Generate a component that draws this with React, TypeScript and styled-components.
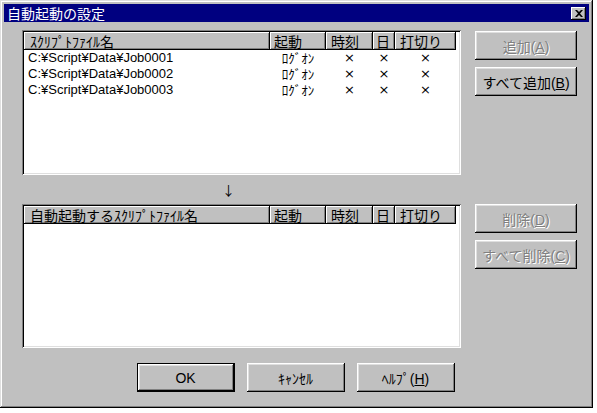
import React from 'react'
import styled, { createGlobalStyle } from 'styled-components'

const GlobalStyle = createGlobalStyle`
  html, body {
    margin: 0;
    padding: 0;
    background: #ffffff;
  }
  body {
    font-family: "Liberation Sans", "Noto Sans CJK JP", sans-serif;
    font-size: 14px;
    color: #000;
  }
`

const COLS = '246px 56px 47px 22px 61px'

const Window = styled.div`
  width: 593px;
  height: 408px;
  box-sizing: border-box;
  background: #c0c0c0;
  padding: 4px;
  display: flex;
  flex-direction: column;
  box-shadow: inset -1px -1px #000, inset 1px 1px #dfdfdf, inset -2px -2px #808080, inset 2px 2px #fff;
`

const TitleBar = styled.div`
  height: 18px;
  background: #000080;
  display: flex;
  align-items: center;
  justify-content: space-between;
  padding: 0 3px 0 3px;
`

const Title = styled.span`
  color: #fff;
  font-family: "Noto Sans CJK JP", sans-serif;
  font-size: 14px;
  line-height: 18px;
`

const CloseBtn = styled.div`
  width: 15px;
  height: 13px;
  background: #c0c0c0;
  display: flex;
  align-items: center;
  justify-content: center;
  box-shadow: inset -1px -1px #000, inset 1px 1px #fff, inset -2px -2px #808080;
`

const Body = styled.div`
  flex: 1;
  display: flex;
  flex-direction: column;
  padding: 8px 0 0 18px;
`

const Section = styled.div`
  display: flex;
  gap: 14px;
`

const ListBox = styled.div`
  width: 439px;
  height: ${(p: { h: number }) => p.h}px;
  box-sizing: border-box;
  background: #fff;
  padding: 2px;
  box-shadow: inset 1px 1px #808080, inset -1px -1px #fff, inset 2px 2px #000, inset -2px -2px #dfdfdf;
`

const HeaderRow = styled.div`
  display: grid;
  grid-template-columns: ${COLS};
  height: 18px;
`

const HeaderCell = styled.div`
  background: #c0c0c0;
  box-shadow: inset -1px -1px #000, inset 1px 1px #fff, inset -2px -2px #808080;
  padding-left: ${(p: { pad?: number }) => p.pad ?? 5}px;
  font-family: "Noto Sans CJK JP", sans-serif;
  font-size: 14px;
  line-height: 18px;
  white-space: nowrap;
  overflow: hidden;
`

const Row = styled.div`
  display: grid;
  grid-template-columns: ${COLS};
  height: 16px;
  line-height: 16px;
`

const PathCell = styled.div`
  padding-left: 4px;
  font-size: 13px;
  white-space: nowrap;
`

const CenterCell = styled.div<{ mark?: boolean }>`
  text-align: center;
  font-family: ${(p) => (p.mark ? '"DejaVu Sans", sans-serif' : '"Noto Sans CJK JP", sans-serif')};
  font-size: 13px;
`

const ButtonCol = styled.div`
  display: flex;
  flex-direction: column;
  gap: 7px;
  padding-top: ${(p: { top: number }) => p.top}px;
`

const Button = styled.button<{ disabled?: boolean; isDefault?: boolean; w?: number }>`
  width: ${(p) => p.w ?? 102}px;
  height: 29px;
  box-sizing: border-box;
  background: #c0c0c0;
  border: ${(p) => (p.isDefault ? '1px solid #000' : 'none')};
  padding: 0;
  font-family: "Liberation Sans", "Noto Sans CJK JP", sans-serif;
  font-size: 14px;
  color: ${(p) => (p.disabled ? '#808080' : '#000')};
  text-shadow: ${(p) => (p.disabled ? '1px 1px #fff' : 'none')};
  box-shadow: inset -1px -1px #000, inset 1px 1px #fff, inset -2px -2px #808080, inset 2px 2px #dfdfdf;
  cursor: default;
  u {
    text-decoration: underline;
  }
`

const ArrowRow = styled.div`
  height: 29px;
  padding-left: 200px;
  font-family: "Noto Sans CJK JP", sans-serif;
  font-size: 13px;
  line-height: 29px;
`

const Footer = styled.div`
  display: flex;
  justify-content: center;
  gap: 12px;
  padding: 15px 20px 0 0;
`

const files = ['C:¥Script¥Data¥Job0001', 'C:¥Script¥Data¥Job0002', 'C:¥Script¥Data¥Job0003']

function Header({ name }: { name: string }) {
  return (
    <HeaderRow>
      <HeaderCell pad={6}>{name}</HeaderCell>
      <HeaderCell pad={4}>起動</HeaderCell>
      <HeaderCell pad={5}>時刻</HeaderCell>
      <HeaderCell pad={3}>日</HeaderCell>
      <HeaderCell pad={5}>打切り</HeaderCell>
    </HeaderRow>
  )
}

export default function App() {
  return (
    <>
      <GlobalStyle />
      <Window>
        <TitleBar>
          <Title>自動起動の設定</Title>
          <CloseBtn>
            <svg width="8" height="7" viewBox="0 0 8 7">
              <path d="M0 0h2l2 2 2-2h2L5 3.5 8 7H6L4 5 2 7H0l3-3.5z" fill="#000" />
            </svg>
          </CloseBtn>
        </TitleBar>
        <Body>
          <Section>
            <ListBox h={145}>
              <Header name="ｽｸﾘﾌﾟﾄﾌｧｲﾙ名" />
              {files.map((f) => (
                <Row key={f}>
                  <PathCell>{f}</PathCell>
                  <CenterCell>ﾛｸﾞｵﾝ</CenterCell>
                  <CenterCell mark>×</CenterCell>
                  <CenterCell mark>×</CenterCell>
                  <CenterCell mark>×</CenterCell>
                </Row>
              ))}
            </ListBox>
            <ButtonCol top={1}>
              <Button disabled>追加(<u>A</u>)</Button>
              <Button>すべて追加(<u>B</u>)</Button>
            </ButtonCol>
          </Section>
          <ArrowRow>↓</ArrowRow>
          <Section>
            <ListBox h={144}>
              <Header name="自動起動するｽｸﾘﾌﾟﾄﾌｧｲﾙ名" />
            </ListBox>
            <ButtonCol top={0}>
              <Button disabled>削除(<u>D</u>)</Button>
              <Button disabled>すべて削除(<u>C</u>)</Button>
            </ButtonCol>
          </Section>
          <Footer>
            <Button isDefault w={98}>OK</Button>
            <Button w={98}>ｷｬﾝｾﾙ</Button>
            <Button w={98}>ﾍﾙﾌﾟ(<u>H</u>)</Button>
          </Footer>
        </Body>
      </Window>
    </>
  )
}
